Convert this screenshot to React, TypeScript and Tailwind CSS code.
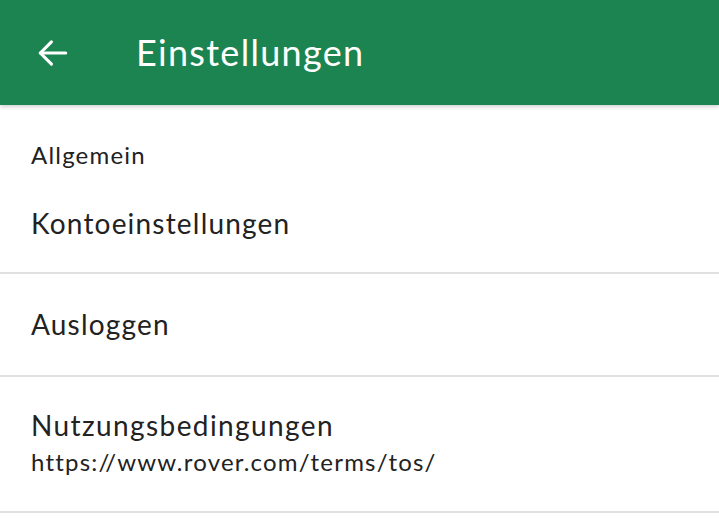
export default function App() {
  return (
    <div className="w-[719px] h-[518px] bg-white overflow-hidden" style={{ fontFamily: 'Lato, "Noto Sans", sans-serif' }}>
      <header className="h-[105px] bg-[#1c8451] flex items-center shadow-[0_2px_4px_rgba(0,0,0,0.18)] relative z-10">
        <div className="w-[136px] flex items-center pl-[34px]">
          <svg width="38" height="38" viewBox="0 0 24 24" fill="none" stroke="white" strokeWidth="2" strokeLinecap="round" strokeLinejoin="round">
            <path d="M20 12H4" />
            <path d="M11 5l-7 7 7 7" />
          </svg>
        </div>
        <h1 className="text-white text-[36px] leading-none tracking-[1.3px] -mt-[1px]">Einstellungen</h1>
      </header>

      <div className="text-[#222222]">
        <div className="h-[68px] pl-[31px] pt-[38px] text-[24px] leading-none tracking-[1.2px]">Allgemein</div>
        <div className="h-[101px] pl-[31px] flex items-center text-[28px] tracking-[1.2px] border-b-2 border-[#e0e0e0]">
          <span>Kontoeinstellungen</span>
        </div>
        <div className="h-[103px] pl-[31px] flex items-center text-[28px] tracking-[1.2px] border-b-2 border-[#e0e0e0]">
          <span className="-mt-[2px]">Ausloggen</span>
        </div>
        <div className="h-[136px] pl-[31px] flex flex-col justify-center border-b-2 border-[#e0e0e0]">
          <span className="text-[28px] leading-[36px] tracking-[1.4px]">Nutzungsbedingungen</span>
          <span className="text-[24px] leading-[38px] tracking-[1.2px]">https://www.rover.com/terms/tos/</span>
        </div>
      </div>
    </div>
  );
}
